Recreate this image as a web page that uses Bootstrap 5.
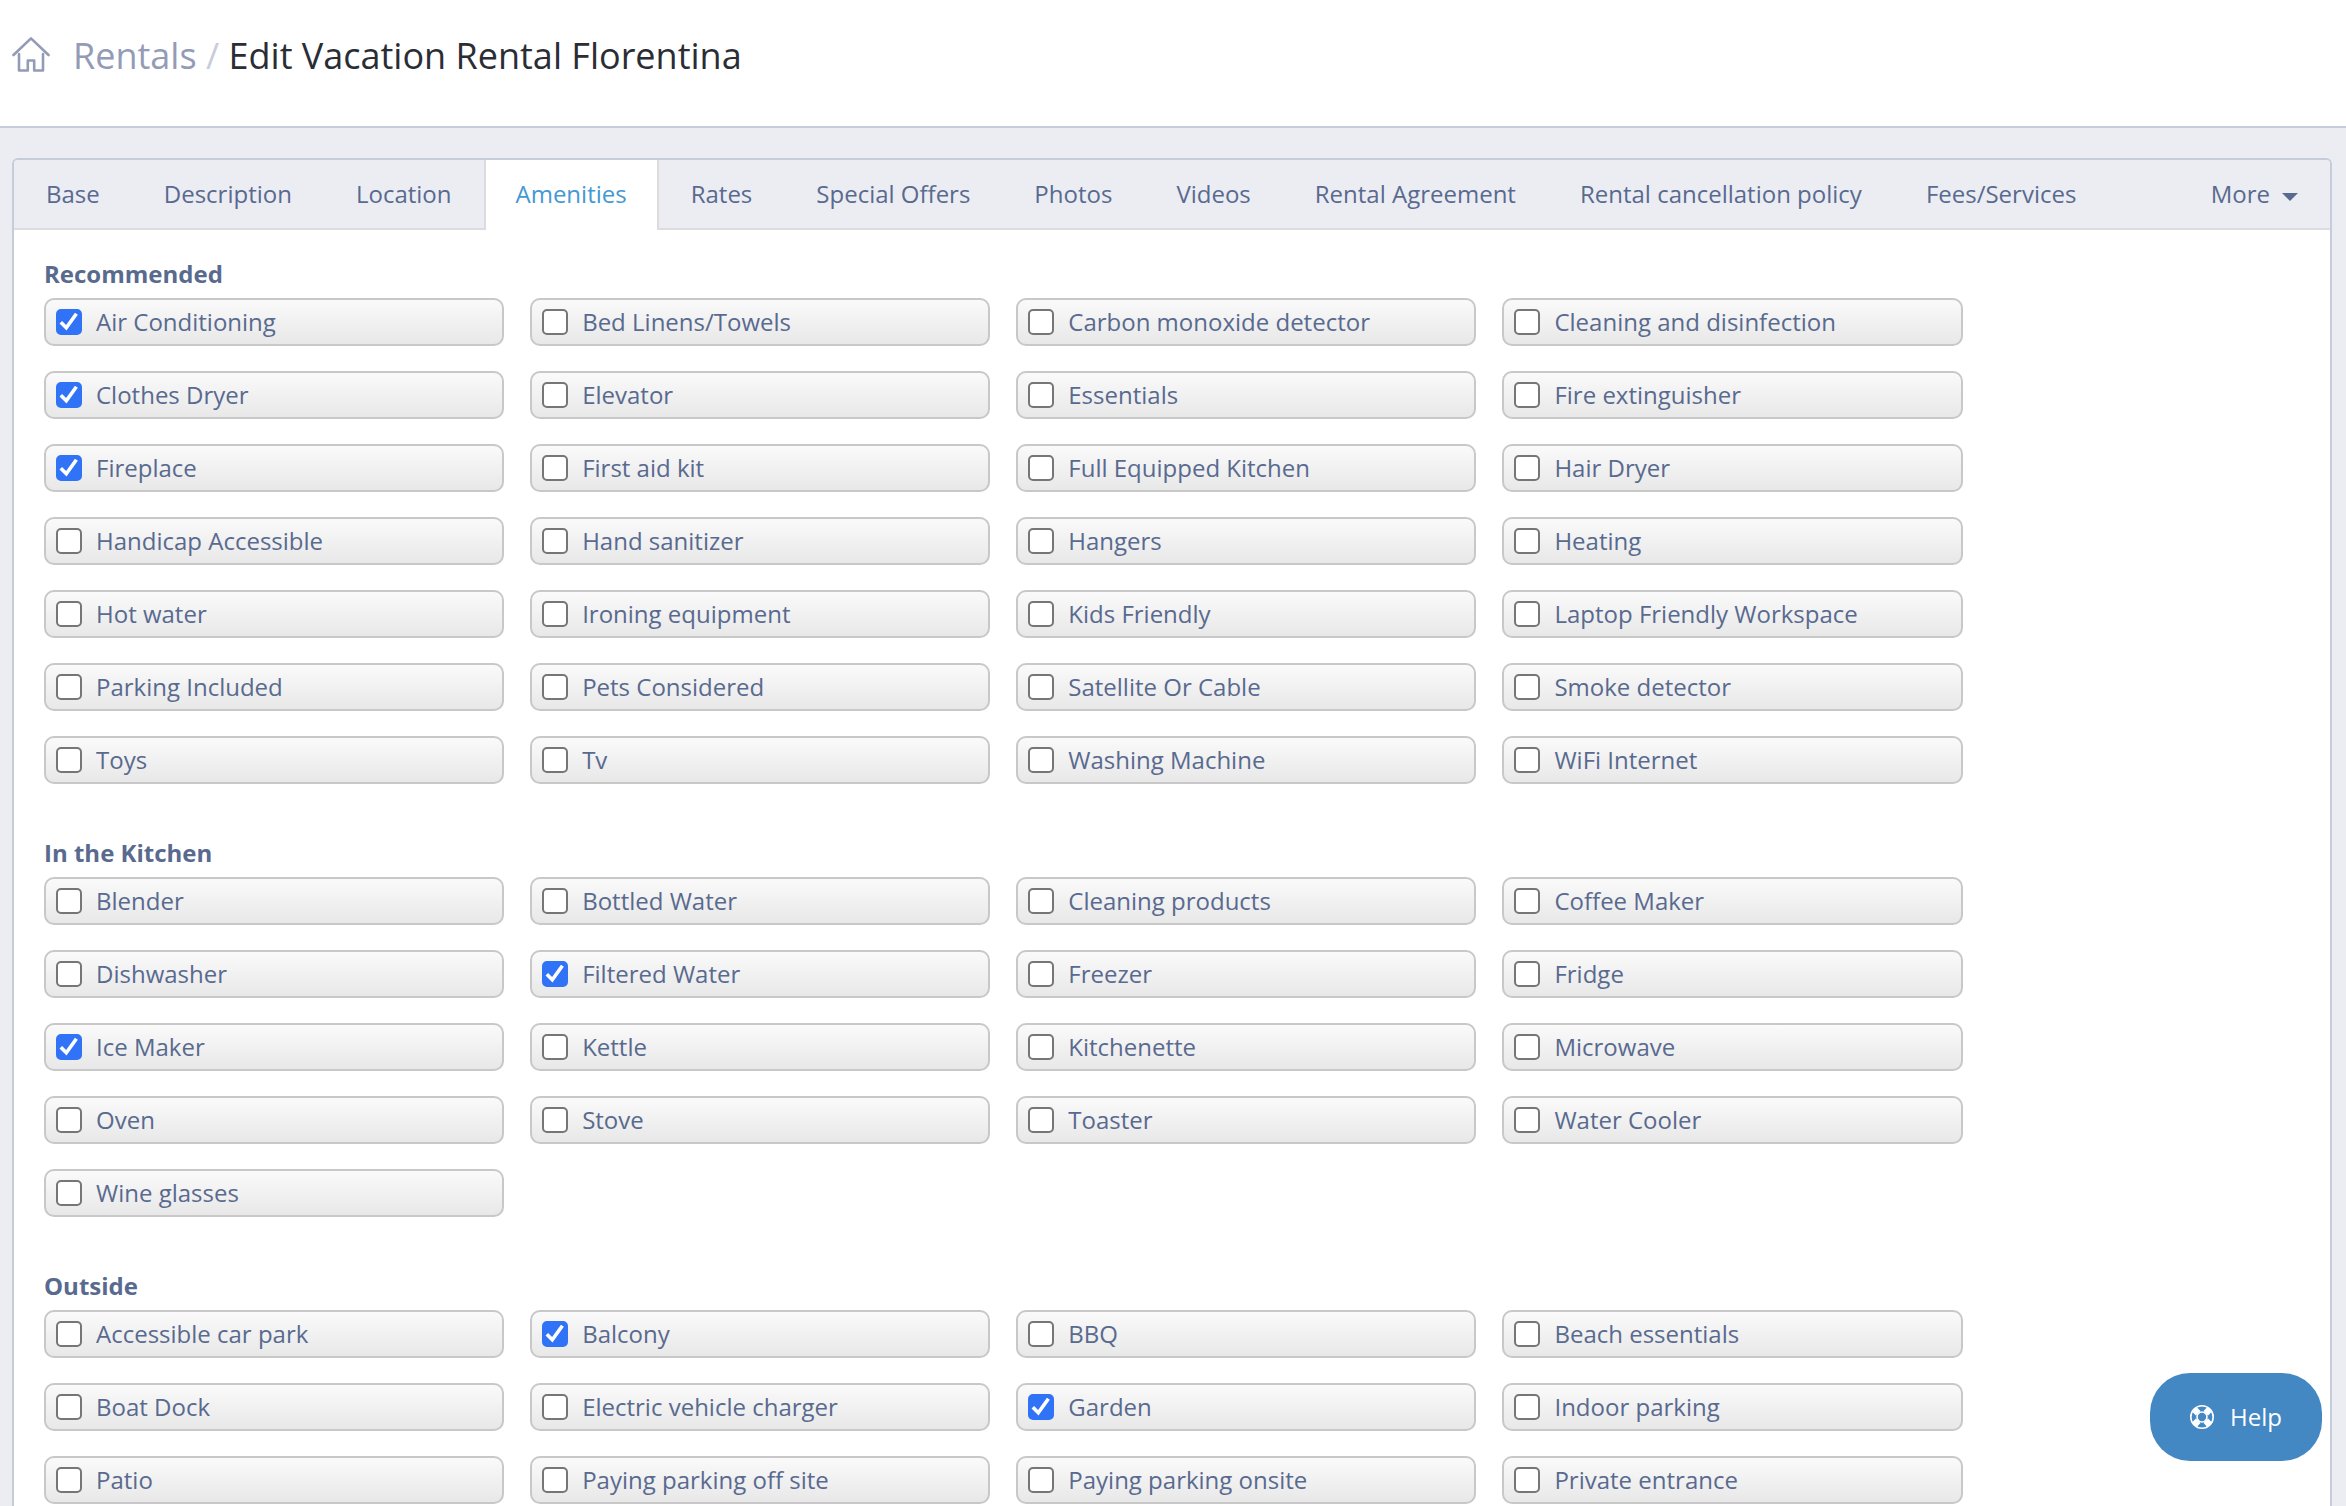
<!DOCTYPE html>
<html lang="en">
<head>
<meta charset="utf-8">
<meta name="viewport" content="width=device-width, initial-scale=1">
<title>Edit Vacation Rental Florentina</title>
<link href="https://cdn.jsdelivr.net/npm/bootstrap@5.3.0/dist/css/bootstrap.min.css" rel="stylesheet">
<style>
  :root { --ink: #596a8f; --line: #c5ccda; --tint: #ecedf3; }
  body { font-family: "Open Sans", "Noto Sans", sans-serif; font-size: 24px; line-height: 32px; color: var(--ink); background: var(--tint); }
  .page-head { padding: 29px 12px 43px; gap: 22px; border-bottom: 2px solid var(--line); }
  .page-head a { color: #939bb6; }
  .page-title { font-size: 36px; line-height: 54px; color: #2b2d35; }
  .page-title .sep { color: #c8cdda; }
  .panel { margin: 30px 14px 0 12px; border: 2px solid var(--line); border-bottom: 0; border-radius: 6px 6px 0 0; }
  .tab-bar { background: var(--tint); border-radius: 4px 4px 0 0; }
  .tab-bar .nav-link { color: var(--ink); padding: 18px 32px; border-bottom: 2px solid #dcdcdf; }
  .tab-bar .nav-link.active { color: #4498d3; background: #fff; padding: 18px 30px; border: solid #dcdcdf; border-width: 0 2px; }
  .tab-bar .spacer { border-bottom: 2px solid #dcdcdf; }
  .tab-bar .dropdown-toggle::after { margin-left: 12px; vertical-align: 2px; border-width: 8px 8px 0; }
  .amenities { padding: 0 30px; }
  .amenities .group-title { font-size: 24px; line-height: 32px; padding: 28px 0 8px; }
  .amenities .row { --bs-gutter-x: 26px; width: calc(85% + 27px); }
  .amenity { height: 48px; margin-bottom: 25px; padding: 0 10px; gap: 14px; border: 2px solid #c8c8c8; border-radius: 10px; background: linear-gradient(#fafafa, #e8e8e8); cursor: pointer; }
  .amenity .form-check-input { width: 26px; height: 26px; margin: 0; border: 2px solid #767676; border-radius: 5px; }
  .amenity .form-check-input:checked { background-color: #3173f6; border-color: #3173f6; background-origin: border-box; background-size: 26px 26px; background-image: url("data:image/svg+xml,%3csvg xmlns='http://www.w3.org/2000/svg' viewBox='0 0 26 26'%3e%3cpath fill='none' stroke='%23fff' stroke-width='3.6' d='M4.800 13.200 10.300 18.800 20.400 4.800'/%3e%3c/svg%3e"); }
  .help-btn { right: 24px; bottom: 45px; padding: 28px 40px; gap: 16px; border: 0; border-radius: 40px; background: #4387c3; color: #fff; }
</style>
</head>
<body class="min-vh-100 d-flex flex-column">
<header class="page-head bg-white d-flex align-items-center">
  <a href="#" aria-label="Home" class="d-flex"><svg width="39" height="38" viewBox="0 0 39 38" fill="none" stroke="currentColor" stroke-width="2.600" stroke-linecap="round" stroke-linejoin="round"><path d="M1.500 18 19 1.400 36.500 18M7 17v16.500h8.800V23.500h6.400v10H31V17"/></svg></a>
  <h1 class="page-title fw-normal m-0"><a href="#" class="text-decoration-none">Rentals</a> <span class="sep">/</span> Edit Vacation Rental Florentina</h1>
</header>
<main class="panel bg-white flex-grow-1">
  <nav class="tab-bar nav flex-nowrap text-nowrap" aria-label="Rental sections">
    <a class="nav-link" href="#">Base</a>
    <a class="nav-link" href="#">Description</a>
    <a class="nav-link" href="#">Location</a>
    <a class="nav-link active" aria-current="page" href="#">Amenities</a>
    <a class="nav-link" href="#">Rates</a>
    <a class="nav-link" href="#">Special Offers</a>
    <a class="nav-link" href="#">Photos</a>
    <a class="nav-link" href="#">Videos</a>
    <a class="nav-link" href="#">Rental Agreement</a>
    <a class="nav-link" href="#">Rental cancellation policy</a>
    <a class="nav-link" href="#">Fees/Services</a>
    <span class="spacer flex-grow-1"></span>
    <a class="nav-link dropdown-toggle" href="#" role="button">More</a>
  </nav>
  <form class="amenities" id="amenities"></form>
</main>
<button type="button" class="help-btn position-fixed d-flex align-items-center">
  <svg width="24" height="24" viewBox="0 0 24 24" fill="none" stroke="#fff"><circle cx="12" cy="12" r="11.200" stroke-width="1.600"/><circle cx="12" cy="12" r="5" stroke-width="1.600"/><g stroke-width="6.500"><path d="M4.300 4.300 8.200 8.200M15.800 15.800l3.900 3.900M19.700 4.300 15.800 8.200M8.200 15.800l-3.900 3.900"/></g></svg>
  Help
</button>
<script src="https://cdn.jsdelivr.net/npm/bootstrap@5.3.0/dist/js/bootstrap.bundle.min.js"></script>
<script>
  // A leading * marks an amenity that is switched on.
  const groups = {
    'Recommended': ['*Air Conditioning', 'Bed Linens/Towels', 'Carbon monoxide detector', 'Cleaning and disinfection', '*Clothes Dryer', 'Elevator', 'Essentials', 'Fire extinguisher', '*Fireplace', 'First aid kit', 'Full Equipped Kitchen', 'Hair Dryer', 'Handicap Accessible', 'Hand sanitizer', 'Hangers', 'Heating', 'Hot water', 'Ironing equipment', 'Kids Friendly', 'Laptop Friendly Workspace', 'Parking Included', 'Pets Considered', 'Satellite Or Cable', 'Smoke detector', 'Toys', 'Tv', 'Washing Machine', 'WiFi Internet'],
    'In the Kitchen': ['Blender', 'Bottled Water', 'Cleaning products', 'Coffee Maker', 'Dishwasher', '*Filtered Water', 'Freezer', 'Fridge', '*Ice Maker', 'Kettle', 'Kitchenette', 'Microwave', 'Oven', 'Stove', 'Toaster', 'Water Cooler', 'Wine glasses'],
    'Outside': ['Accessible car park', '*Balcony', 'BBQ', 'Beach essentials', 'Boat Dock', 'Electric vehicle charger', '*Garden', 'Indoor parking', 'Patio', 'Paying parking off site', 'Paying parking onsite', 'Private entrance']
  };
  let n = 0;
  document.getElementById('amenities').innerHTML = Object.entries(groups).map(([title, items]) =>
    `<section><h2 class="group-title fw-bold m-0">${title}</h2><div class="row row-cols-4">` +
    items.map(item => {
      const on = item.startsWith('*'), id = 'amenity' + (++n);
      return `<div><label class="amenity d-flex align-items-center" for="${id}"><input class="form-check-input" type="checkbox" id="${id}"${on ? ' checked' : ''}>${item.replace('*', '')}</label></div>`;
    }).join('') + '</div></section>').join('');
</script>
</body>
</html>
